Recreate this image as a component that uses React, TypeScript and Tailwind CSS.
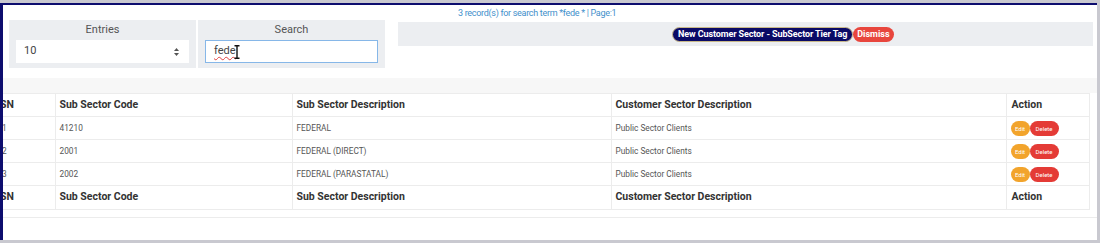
import React from "react";

const rows = [
  { sn: "1", code: "41210", desc: "FEDERAL", cust: "Public Sector Clients" },
  { sn: "2", code: "2001", desc: "FEDERAL (DIRECT)", cust: "Public Sector Clients" },
  { sn: "3", code: "2002", desc: "FEDERAL (PARASTATAL)", cust: "Public Sector Clients" },
];

function HeaderRow() {
  return (
    <tr className="h-[23px] border-t border-[#ececec] text-[10.5px] font-bold text-[#333]">
      <td className="pl-[6px] border-r border-[#ececec]">SN</td>
      <td className="pl-[4px] border-r border-[#ececec]">Sub Sector Code</td>
      <td className="pl-[4px] border-r border-[#ececec]">Sub Sector Description</td>
      <td className="pl-[4px] border-r border-[#ececec]">Customer Sector Description</td>
      <td className="pl-[5px]">Action</td>
    </tr>
  );
}

export default function App() {
  return (
    <div
      className="w-[1100px] h-[243px] bg-[#c9c9d0] pt-[3px] pr-[3px] pb-[3px]"
      style={{ fontFamily: "Roboto, 'Liberation Sans', sans-serif" }}
    >
      <div className="h-full bg-white border-t-2 border-l-[3px] border-[#0d0d6e] overflow-hidden flex flex-col">
        {/* top section */}
        <div className="flex pt-[2px]">
          <div className="pl-[6px] pt-[13px] flex gap-[2px]">
            <div className="w-[187px] h-[48px] bg-[#eceef1] flex flex-col items-center pt-[3px]">
              <div className="text-[11px] leading-[14px] text-[#555]">Entries</div>
              <div className="mt-[3px] w-[173px] h-[23px] bg-white flex items-center justify-between pl-[8px] pr-[10px]">
                <span className="text-[11px] text-[#444]">10</span>
                <svg width="5" height="8" viewBox="0 0 5 8">
                  <path d="M2.5 0 L5 3 L0 3 Z" fill="#555" />
                  <path d="M2.5 8 L5 5 L0 5 Z" fill="#555" />
                </svg>
              </div>
            </div>
            <div className="w-[187px] h-[48px] bg-[#eceef1] flex flex-col items-center pt-[3px]">
              <div className="text-[11px] leading-[14px] text-[#555]">Search</div>
              <div className="mt-[3px] w-[173px] h-[23px] bg-white border border-[#86b7e8] flex items-center pl-[8px] relative">
                <span className="text-[11px] text-[#444] underline decoration-wavy decoration-[#e04040] decoration-1 underline-offset-2">
                  fede
                </span>
                <svg className="absolute left-[28px] top-[4px]" width="6" height="14" viewBox="0 0 6 14">
                  <path d="M0.5 0.8 H5.5 M3 0.8 V13.2 M0.5 13.2 H5.5" stroke="#111" strokeWidth="1.4" fill="none" />
                </svg>
              </div>
            </div>
          </div>
          <div className="flex-1 flex flex-col pl-[13px] pr-[4px]">
            <div className="h-[13px] text-[9px] leading-[13px] text-[#3f8fcb] pl-[60px] tracking-[-0.3px]">
              3 record(s) for search term *fede * | Page:1
            </div>
            <div className="mt-[2px] h-[24px] bg-[#eceef1] flex items-center pl-[274px]">
              <span className="h-[15px] px-[5px] rounded-full bg-[#0a0a66] border border-[#c9b98a] text-white text-[9px] font-bold leading-[13px] tracking-[-0.1px]">
                New Customer Sector - SubSector Tier Tag
              </span>
              <span className="h-[15px] px-[4px] rounded-full bg-[#e8463d] text-white text-[9px] font-bold leading-[15px]">
                Dismiss
              </span>
            </div>
          </div>
        </div>
        <div className="h-[10px]" />
        <div className="h-[15px] bg-[#f7f7f7]" />
        {/* table */}
        <div className="-ml-[9px] w-[1096px] border-r border-[#ececec]">
          <table className="w-[1095px] border-collapse table-fixed">
            <colgroup>
              <col className="w-[61px]" />
              <col className="w-[237px]" />
              <col className="w-[319px]" />
              <col className="w-[395px]" />
              <col className="w-[83px]" />
            </colgroup>
            <tbody>
              <HeaderRow />
              {rows.map((r) => (
                <tr key={r.sn} className="h-[23px] border-t border-[#ececec] text-[8.3px] text-[#555]">
                  <td className="pl-[8px] border-r border-[#ececec]">{r.sn}</td>
                  <td className="pl-[4px] border-r border-[#ececec]">{r.code}</td>
                  <td className="pl-[4px] border-r border-[#ececec]">{r.desc}</td>
                  <td className="pl-[4px] border-r border-[#ececec]">{r.cust}</td>
                  <td className="pl-[4px]">
                    <div className="flex items-center">
                      <span className="h-[15px] w-[19px] rounded-full bg-[#f2a42c] text-white text-[6px] leading-[15px] text-center">
                        Edit
                      </span>
                      <span className="h-[15px] w-[29px] rounded-full bg-[#e43b36] text-white text-[6px] leading-[15px] text-center">
                        Delete
                      </span>
                    </div>
                  </td>
                </tr>
              ))}
              <HeaderRow />
            </tbody>
          </table>
          <div className="border-t border-[#ececec]" />
        </div>
        <div className="h-[7px]" />
        <div className="border-t border-[#ececec]" />
      </div>
    </div>
  );
}
